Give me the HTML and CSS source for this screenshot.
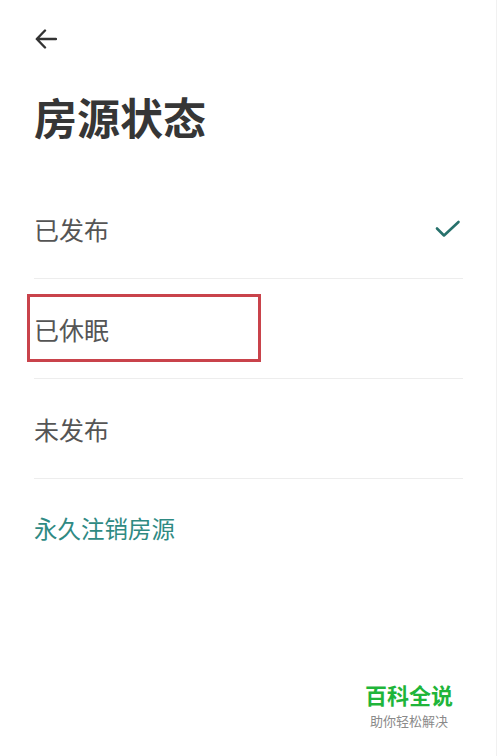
FILE: index.html
```html
<!DOCTYPE html>
<html lang="zh-CN">
<head>
    <meta charset="UTF-8">
    <meta name="viewport" content="width=device-width, initial-scale=1.0">
    <title>房源状态</title>
    <link rel="stylesheet" href="styles.css">
</head>
<body>
    <div class="page">
        <div class="top-bar">
            <svg class="back-icon" width="22" height="20" viewBox="0 0 22 20">
                <path d="M21 10H2M10 1.5L1.8 10L10 18.5" fill="none" stroke="#333" stroke-width="2.4" stroke-linecap="round" stroke-linejoin="round"/>
            </svg>
        </div>
        <h1 class="title">房源状态</h1>
        <div class="status-list">
            <div class="status-row">
                <span>已发布</span>
                <svg class="check-icon" width="26" height="20" viewBox="0 0 26 20">
                    <path d="M2 9.5L9 16.5L23.5 3" fill="none" stroke="#27716c" stroke-width="2.6" stroke-linecap="round" stroke-linejoin="round"/>
                </svg>
            </div>
            <div class="status-row marked">
                <span>已休眠</span>
                <div class="mark-box"></div>
            </div>
            <div class="status-row">
                <span>未发布</span>
            </div>
        </div>
        <div class="cancel-row">永久注销房源</div>
        <div class="watermark">
            <div class="wm-title">百科全说</div>
            <div class="wm-sub">助你轻松解决</div>
        </div>
    </div>
</body>
</html>
```

FILE: styles.css
```css
body {
    margin: 0;
    background-color: #fff;
    font-family: "Noto Sans CJK SC", "Noto Sans", sans-serif;
}
.page {
    position: relative;
    width: 497px;
    height: 756px;
    padding: 0 33px 0 34px;
    box-sizing: border-box;
    border-right: 1px solid #f1f1f1;
}
.top-bar {
    height: 78px;
    display: flex;
    align-items: center;
}
.back-icon {
    display: block;
    margin-left: 1px;
}
.title {
    margin: 8px 0 33px;
    font-size: 43px;
    line-height: 60px;
    font-weight: bold;
    color: #363636;
}
.status-row {
    height: 99px;
    border-bottom: 1px solid #ededed;
    display: flex;
    align-items: center;
    justify-content: space-between;
    font-size: 25px;
    color: #555;
}
.check-icon {
    display: block;
    margin-right: 2px;
}
.marked {
    position: relative;
}
.mark-box {
    position: absolute;
    left: -7px;
    top: 15px;
    width: 234px;
    height: 68px;
    border: 3px solid #c9434b;
    box-sizing: border-box;
}
.cancel-row {
    height: 98px;
    display: flex;
    align-items: center;
    font-size: 23.5px;
    color: #2f8a83;
}
.watermark {
    position: absolute;
    left: 365px;
    top: 678px;
    text-align: center;
}
.wm-title {
    font-size: 22px;
    line-height: 32px;
    font-weight: bold;
    color: #1fb53a;
}
.wm-sub {
    margin-top: 1px;
    font-size: 13px;
    line-height: 19px;
    color: #8a8a8a;
}
```
